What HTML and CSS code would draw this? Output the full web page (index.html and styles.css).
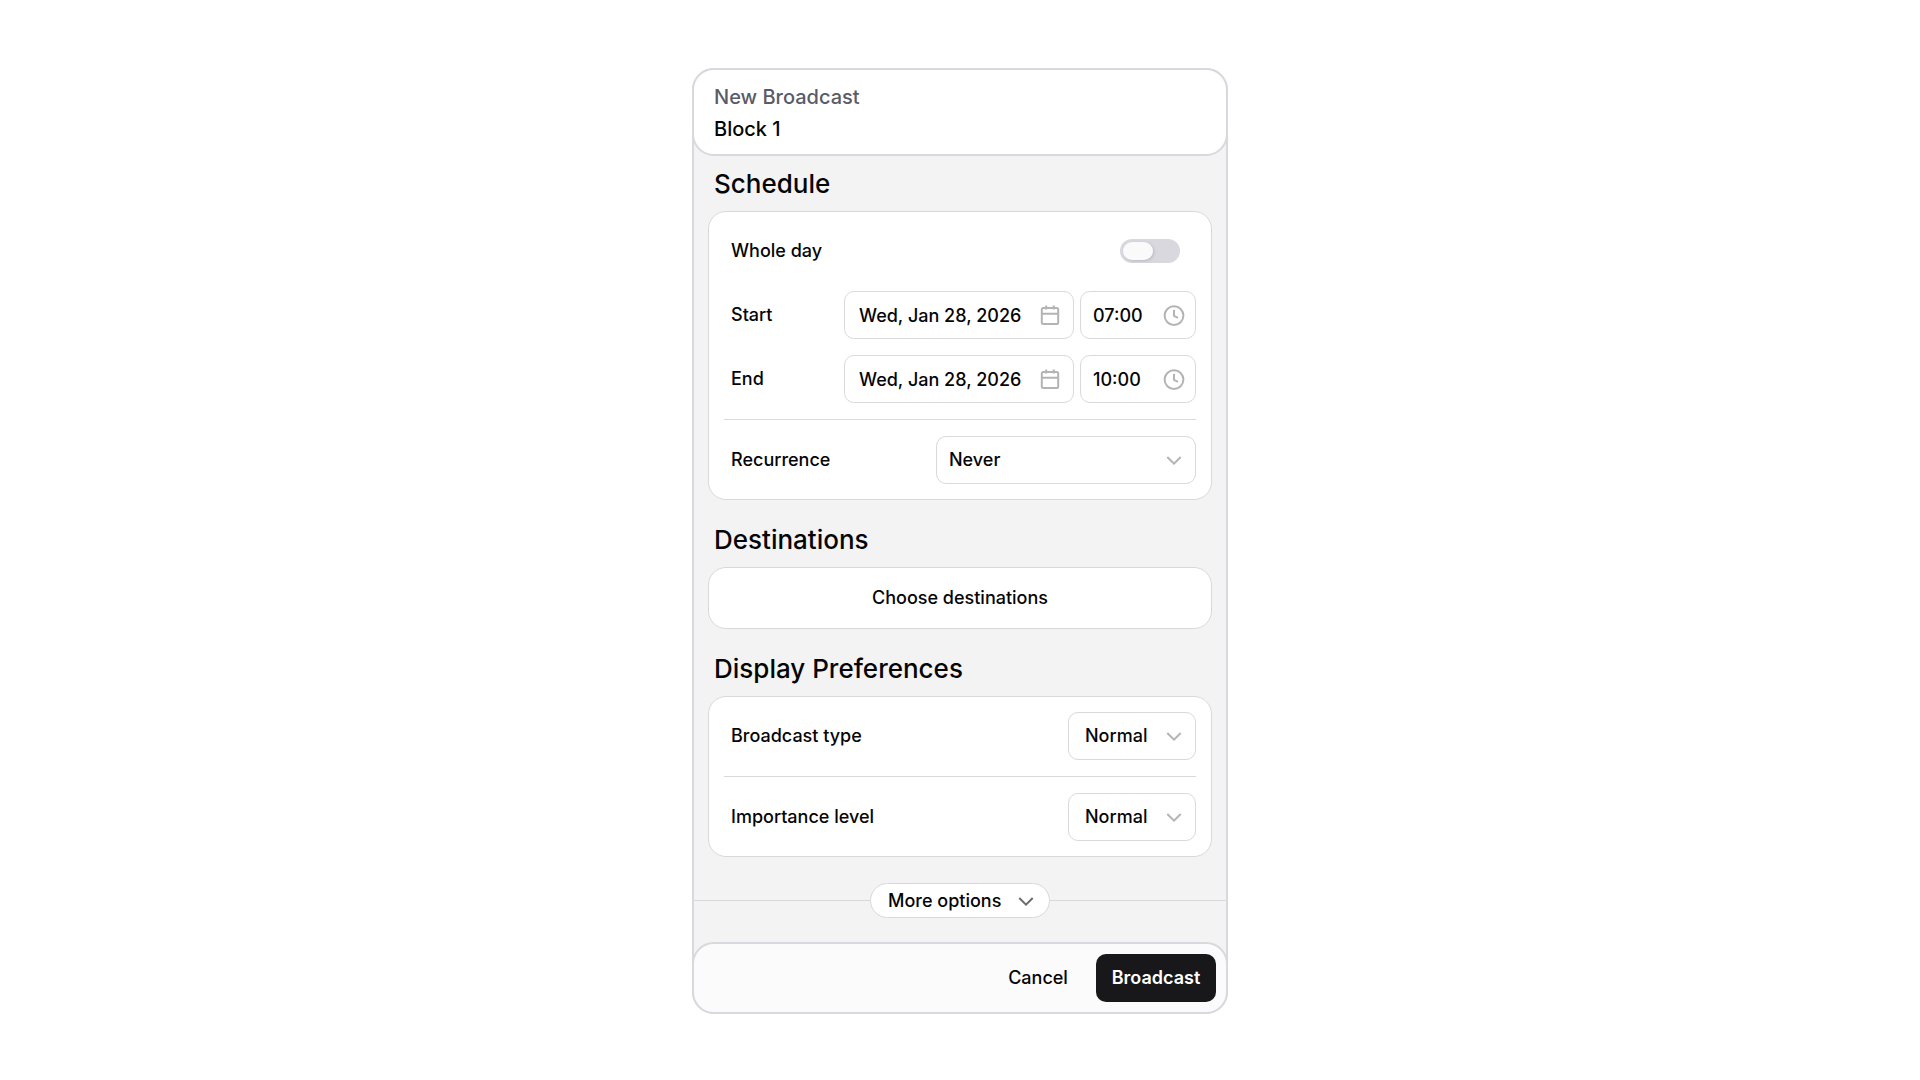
FILE: index.html
```html
<!DOCTYPE html>
<html lang="en">
<head>
  <meta charset="UTF-8">
  <meta name="viewport" content="width=device-width, initial-scale=1.0">
  <title>New Broadcast</title>
  <link rel="stylesheet" href="styles.css">
</head>
<body>
  <!-- Shared icons -->
  <svg class="sprite" aria-hidden="true">
    <symbol id="icon-calendar" viewBox="0 0 24 24">
      <rect x="3.8" y="5" width="16.4" height="16" rx="1.5"/>
      <path d="M3.8 10.8h16.4M8.2 2.5v4M15.8 2.5v4"/>
    </symbol>
    <symbol id="icon-clock" viewBox="0 0 24 24">
      <circle cx="12" cy="12.6" r="9.4"/>
      <path d="M12 7v5.8l4 2"/>
    </symbol>
    <symbol id="icon-chevron" viewBox="0 0 24 24">
      <path d="M5.3 9l6.7 6.7 6.7-6.7"/>
    </symbol>
  </svg>

  <form class="panel">
    <header class="panel-header">
      <h1 class="panel-kind">New Broadcast</h1>
      <p class="panel-name">Block 1</p>
    </header>

    <main class="panel-body">
      <h2 class="section-title">Schedule</h2>
      <section class="card">
        <div class="row">
          <label for="whole-day">Whole day</label>
          <input class="toggle" type="checkbox" role="switch" id="whole-day">
        </div>
        <div class="row">
          <label for="start-date">Start</label>
          <div class="fields">
            <div class="field field-date">
              <input type="text" id="start-date" value="Wed, Jan 28, 2026">
              <svg class="icon"><use href="#icon-calendar"/></svg>
            </div>
            <div class="field field-time">
              <input type="text" aria-label="Start time" value="07:00">
              <svg class="icon"><use href="#icon-clock"/></svg>
            </div>
          </div>
        </div>
        <div class="row">
          <label for="end-date">End</label>
          <div class="fields">
            <div class="field field-date">
              <input type="text" id="end-date" value="Wed, Jan 28, 2026">
              <svg class="icon"><use href="#icon-calendar"/></svg>
            </div>
            <div class="field field-time">
              <input type="text" aria-label="End time" value="10:00">
              <svg class="icon"><use href="#icon-clock"/></svg>
            </div>
          </div>
        </div>
        <hr class="divider">
        <div class="row">
          <label for="recurrence">Recurrence</label>
          <div class="field field-recurrence">
            <select id="recurrence">
              <option>Never</option>
            </select>
            <svg class="icon"><use href="#icon-chevron"/></svg>
          </div>
        </div>
      </section>

      <h2 class="section-title">Destinations</h2>
      <button class="choose" type="button">Choose destinations</button>

      <h2 class="section-title">Display Preferences</h2>
      <section class="card">
        <div class="row">
          <label for="broadcast-type">Broadcast type</label>
          <div class="field field-level">
            <select id="broadcast-type">
              <option>Normal</option>
            </select>
            <svg class="icon"><use href="#icon-chevron"/></svg>
          </div>
        </div>
        <hr class="divider">
        <div class="row">
          <label for="importance">Importance level</label>
          <div class="field field-level">
            <select id="importance">
              <option>Normal</option>
            </select>
            <svg class="icon"><use href="#icon-chevron"/></svg>
          </div>
        </div>
      </section>
    </main>

    <div class="more">
      <button class="more-button" type="button">
        More options
        <svg class="icon"><use href="#icon-chevron"/></svg>
      </button>
    </div>

    <footer class="panel-footer">
      <button class="button" type="button">Cancel</button>
      <button class="button button-primary" type="submit">Broadcast</button>
    </footer>
  </form>
</body>
</html>
```
FILE: styles.css
```css
* {
  box-sizing: border-box;
}

body {
  margin: 0;
  padding: 68px 16px;
  background: #fff;
  color: #050506;
  font-family: Inter, "Liberation Sans", sans-serif;
  font-size: 18px;
  font-weight: 500;
  line-height: 24px;
}

h1, h2, p {
  margin: 0;
}

button, input, select {
  font: inherit;
  color: inherit;
}

button {
  cursor: pointer;
}

.sprite {
  display: none;
}

.icon {
  width: 24px;
  height: 24px;
  fill: none;
  stroke: #b4b4b4;
  stroke-width: 2;
  pointer-events: none;
}

/* Panel */
.panel {
  max-width: 536px;
  margin: 0 auto;
  background: #f3f3f3;
  border: 2px solid #d8d8de;
  border-radius: 22px;
}

/* header and footer sit over the panel border */
.panel-header,
.panel-footer {
  margin: -2px;
  border: 2px solid #d8d8de;
  border-radius: 22px;
}

.panel-header {
  padding: 11px 20px 9px;
  background: #fff;
}

.panel-kind,
.panel-name {
  font-size: 20px;
  font-weight: 500;
  line-height: 32px;
}

.panel-kind {
  color: #5b5b66;
}

.panel-body {
  padding: 2px 14px 0;
}

.section-title {
  margin: 24px 6px 11px;
  font-size: 26px;
  font-weight: 500;
  line-height: 32px;
}

.section-title:first-child {
  margin-top: 12px;
}

/* Cards */
.card {
  display: flex;
  flex-direction: column;
  gap: 16px;
  padding: 15px;
  background: #fff;
  border: 1px solid #d9d9dc;
  border-radius: 18px;
}

.row {
  display: flex;
  align-items: center;
  justify-content: space-between;
  min-height: 48px;
  padding-left: 7px;
}

.divider {
  width: 100%;
  height: 1px;
  margin: 0;
  border: 0;
  background: #d9d9dc;
}

/* Fields */
.fields {
  display: flex;
  gap: 6px;
}

.field {
  display: grid;
  align-items: center;
}

.field > * {
  grid-area: 1 / 1;
}

.field > .icon {
  justify-self: end;
  margin-right: 10px;
}

.field input,
.field select {
  width: 100%;
  height: 48px;
  padding: 0 0 0 12px;
  background: #fff;
  border: 1px solid #d9d9dc;
  border-radius: 10px;
  appearance: none;
}

.field-date {
  width: 230px;
}

.field-date > .icon {
  margin-right: 12px;
}

.field-date input {
  padding-left: 14px;
}

.field-time {
  width: 116px;
}

.field-recurrence {
  width: 260px;
}

.field-level {
  width: 128px;
}

.field-level select {
  padding-left: 16px;
}

/* Switch */
.toggle {
  display: flex;
  width: 60px;
  height: 24px;
  margin: 0 16px 0 0;
  padding: 3px;
  background: #d8d8de;
  border-radius: 12px;
  appearance: none;
  cursor: pointer;
}

.toggle::before {
  content: "";
  width: 30px;
  height: 18px;
  background: #fafafa;
  border-radius: 9px;
  box-shadow: 1px 1px 3px rgba(0, 0, 0, 0.15);
}

.toggle:checked {
  justify-content: flex-end;
  background: #18181b;
}

/* Buttons */
.choose {
  display: block;
  width: 100%;
  height: 62px;
  background: #fff;
  border: 1px solid #d9d9dc;
  border-radius: 18px;
}

.more {
  display: flex;
  align-items: center;
  margin: 26px 0;
}

.more::before,
.more::after {
  content: "";
  flex: 1;
  height: 1px;
  background: #d9d9dc;
}

.more-button {
  display: flex;
  align-items: center;
  justify-content: space-between;
  width: 180px;
  height: 35px;
  padding: 0 11px 0 17px;
  background: #fff;
  border: 1px solid #d9d9dc;
  border-radius: 18px;
}

.more-button .icon {
  stroke: #6b6b70;
}

.panel-footer {
  display: flex;
  justify-content: flex-end;
  padding: 10px;
  background: #fbfbfb;
}

.button {
  width: 116px;
  height: 48px;
  padding: 0;
  background: none;
  border: 0;
  border-radius: 10px;
}

.button-primary {
  width: 120px;
  background: #18181b;
  color: #fff;
  font-weight: 600;
}
```
